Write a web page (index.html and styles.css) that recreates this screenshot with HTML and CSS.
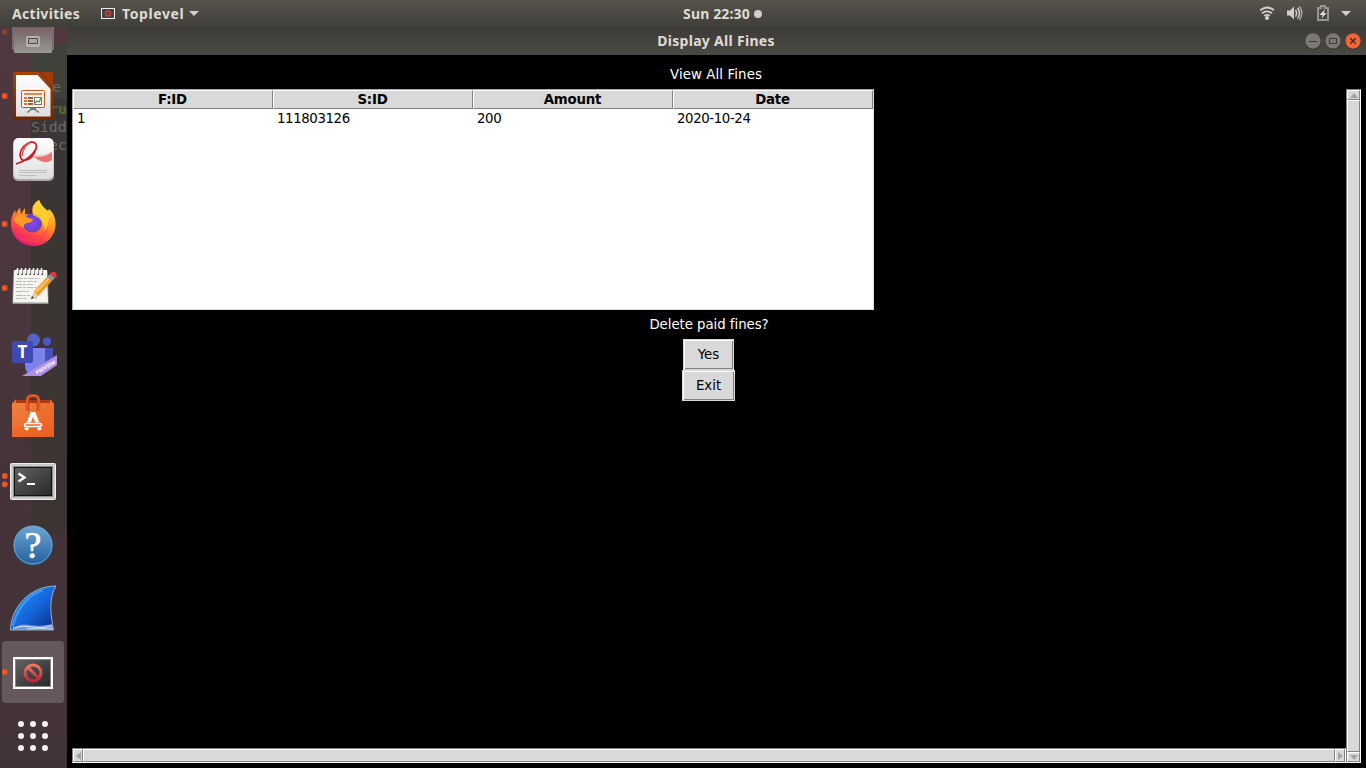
FILE: index.html
```html
<!DOCTYPE html>
<html lang="en">
<head>
<meta charset="utf-8">
<title>Display All Fines</title>
<link rel="stylesheet" href="styles.css">
</head>
<body>
<header class="topbar">
  <div class="top-left">
    <span class="activities"><span class="t-act">Activities</span></span>
    <svg class="app-ico" width="14" height="12" viewBox="0 0 14 12"><rect x=".5" y=".5" width="13" height="10" fill="#444" stroke="#eee"/><circle cx="7" cy="5.5" r="2.5" fill="none" stroke="#d13c3c" stroke-width="1.3"/><path d="M5.3 3.8l3.4 3.4" stroke="#d13c3c"/></svg>
    <span class="t-top">Toplevel</span>
    <svg class="caret" width="10" height="5" viewBox="0 0 10 5"><path d="M0 0h10L5 5z" fill="#d3d0cc"/></svg>
  </div>
  <div class="clock"><span>Sun 22:30</span><i></i></div>
  <svg class="tray" width="106" height="27" viewBox="1260 0 106 27">
    <g fill="none" stroke="#d3d0cc" stroke-width="1.800"><path d="M1260 10.300q7-5.500 14 0"/><path d="M1262 13.200q5-3.800 10 0"/><path d="M1264.200 15.800q2.800-2 5.600 0"/></g>
    <circle cx="1267" cy="18" r="2.100" fill="#d3d0cc"/>
    <path d="M1287 10.500h3l4-4v13l-4-4h-3z" fill="#d3d0cc"/>
    <g fill="none" stroke="#d3d0cc" stroke-width="1.500"><path d="M1295.500 10q2.200 3.300 0 6.600"/><path d="M1297.500 8q4 5.300 0 10.600"/><path d="M1299.300 6.500q5 6.800 0 13.600" stroke="#aaa7a2"/></g>
    <path d="M1318 8h3V6h4v2h3v12h-10z" fill="none" stroke="#999690" stroke-width="2"/>
    <path d="M1325 9l-5.500 6h3l-1 3.500 5-5.500h-2.800z" fill="#e5e2de"/>
    <path d="M1341 11h10l-5 5z" fill="#d3d0cc"/>
  </svg>
</header>
<div class="desktop">
  <nav class="dock">
    <div class="behind"><span class="b1">e</span><span class="b2">ru</span><span class="b3">Sidd</span><span class="b4">ec</span></div>
    <svg class="cell first" viewBox="0 27 67 37">
      <defs>
        <linearGradient id="files" x2="0" y2="1"><stop stop-color="#776065"/><stop offset="1" stop-color="#979894"/></linearGradient>
        <linearGradient id="paper" x2="0" y2="1"><stop stop-color="#fff"/><stop offset="1" stop-color="#dedede"/></linearGradient>
        <linearGradient id="brown" x2="0" y2="1"><stop stop-color="#a94308"/><stop offset="1" stop-color="#702900"/></linearGradient>
        <linearGradient id="fox" x1=".8" x2=".3" y2="1"><stop stop-color="#ffe43a"/><stop offset=".4" stop-color="#ff9b24"/><stop offset=".75" stop-color="#ff404b"/><stop offset="1" stop-color="#d8117f"/></linearGradient>
        <radialGradient id="globe"><stop stop-color="#8c45f4"/><stop offset="1" stop-color="#6546bd"/></radialGradient>
        <linearGradient id="bag" x2="1" y2="1"><stop stop-color="#f1803c"/><stop offset="1" stop-color="#eb5d23"/></linearGradient>
        <linearGradient id="screen" x2="1" y2="1"><stop stop-color="#626262"/><stop offset=".55" stop-color="#424242"/><stop offset="1" stop-color="#292929"/></linearGradient>
        <linearGradient id="help" x2="0" y2="1"><stop stop-color="#6da4d4"/><stop offset="1" stop-color="#23619f"/></linearGradient>
        <linearGradient id="fin" x2="1" y2="1"><stop stop-color="#2e98f5"/><stop offset=".5" stop-color="#1469dd"/><stop offset="1" stop-color="#082a84"/></linearGradient>
        <linearGradient id="ban" x2="0" y2="1"><stop stop-color="#ef7661"/><stop offset="1" stop-color="#c5253c"/></linearGradient>
      </defs>
      <circle cx="4.700" cy="32" r="2.700" fill="#8b4331"/>
      <path d="M12 27h42v23H12z" fill="#776b6d"/><path d="M14 27h38v25a1 1 0 0 1-1 1H15a1 1 0 0 1-1-1z" fill="url(#files)"/>
      <rect x="26" y="36" width="14" height="11" rx="2" fill="#b5b0b0"/><rect x="28.500" y="38.500" width="9" height="5" fill="#aaa5a5" stroke="#514b4a"/>
    </svg>
    <svg class="cell" viewBox="0 0 67 64">
      <circle cx="4.700" cy="32" r="2.900" fill="#f05423"/>
      <path d="M40 8h11q2 0 2 2v13z" fill="#a13b03"/>
      <path d="M15 8h24l14 16v29q0 3-3 3H16q-3 0-3-3V10q0-2 2-2z" fill="url(#brown)"/>
      <path d="M16 11h21.500L50.500 25v27.500H16z" fill="url(#paper)"/>
      <rect x="21.500" y="26.500" width="23" height="17" rx="1" fill="#fff2e7" stroke="#b85b27"/>
      <path d="M24 30h18" stroke="#d77736" stroke-width="1.700"/>
      <path d="M24 34h3m-3 3h3m-3 3h3" stroke="#e06c38" stroke-width="1.800"/><path d="M28 34h5m-5 3h5m-5 3h5" stroke="#79310e" stroke-width="1.300"/>
      <rect x="34.500" y="33.500" width="7" height="7" fill="#fff" stroke="#777"/><path d="M35 39l2-2 2 1 2-4" fill="none" stroke="#39a435" stroke-width="1.300"/>
      <path d="M33 44v1m-1 0l-5 3.500m7-3.500l5 3.500" stroke="#777" stroke-width="1.500"/><path d="M30 45h6" stroke="#777" stroke-width="2"/>
    </svg>
    <svg class="cell" viewBox="0 0 67 64">
      <rect x="13" y="11" width="41" height="42" rx="5" fill="#aaa"/><rect x="13.500" y="10" width="40" height="41" rx="5" fill="url(#paper)"/>
      <path d="M33 28Q43 31 52 24v8Q44 38 33 28z" fill="#e77575"/>
      <path d="M16 36Q30 28 40 28Q46 28 52 24" stroke="#eeb0b0" stroke-width="1.500" fill="none"/>
      <path d="M16 36Q30 32 36 21Q38 14 31 14Q21 17 20 27Q21 35 29 31Q33 29 36 21" fill="none" stroke="#c8232d" stroke-width="1.800"/>
      <path d="M30 15Q23 18 22 28" fill="none" stroke="#e85a60" stroke-width="1.500"/>
      <path d="M19 42.500h28M19 44.500h28M19 47.500h18" stroke="#bebebe"/>
    </svg>
    <svg class="cell" viewBox="0 0 67 64">
      <circle cx="4.700" cy="32" r="2.900" fill="#e85826"/>
      <path d="M39 8Q42 15 48 19L49 17Q55 22 55.500 31C56 44 46 54 34 54C21 54 11 45 11 32Q11 24 15 18L16 22Q18 17 20 16L21 22L25 16V22L33 23Q30 12 39 8z" fill="url(#fox)"/>
      <circle cx="32.500" cy="31" r="9.500" fill="url(#globe)"/>
      <path d="M14 27Q17 22 24 23Q29 27 33 27Q32 31 27 31Q23 32 24 36Q16 33 14 27z" fill="#ff9a26"/>
      <path d="M33 23Q31 13 39 8Q41 15 48 19Q51 28 45 39Q44 27 33 23z" fill="#ffd52f" opacity=".8"/>
      <path d="M14 40Q22 49 32 45Q42 47 48 35Q46 49 34 51Q20 52 14 40z" fill="#ff434c" opacity=".55"/>
    </svg>
    <svg class="cell" viewBox="0 0 67 64">
      <circle cx="4.700" cy="32" r="2.900" fill="#e85826"/>
      <path d="M13 15h35l1 33H12z" fill="#686763"/><path d="M14 14h33l1 32H13z" fill="#f4f4f0"/><path d="M13 46h35v1.500H13z" fill="#bfc8bf"/>
      <path d="M18 15v3m4-3v3m4-3v3m4-3v3m4-3v3m4-3v3m4-3v3" stroke="#444" stroke-width="2.200" stroke-linecap="round"/><path d="M17.500 13v4m4-4v4m4-4v4m4-4v4m4-4v4m4-4v4m4-4v4" stroke="#fff" stroke-width="1.800" stroke-linecap="round"/>
      <path d="M17 22.500h23M16 25.500h22M16 28.500h18M16 31.500h20M16 35.500h13M16 39.500h14M16 42.500h10" stroke="#b9bbb7" stroke-dasharray="6 1 3 1"/>
      <path d="M35 44L52 25l-3-4L33 39z" fill="#000" opacity=".15"/>
      <path d="M31 43l3-8 4 4z" fill="#f2cf91"/><path d="M31 43l1-3 2 2z" fill="#222"/>
      <path d="M34 35L47 21l5 4-14 15z" fill="#ee9824"/><path d="M35 35L48 22l2 1-13 14z" fill="#ffc362"/>
      <path d="M47 21l3-3 5 4-3 3z" fill="#8e9797"/><path d="M50 18q3-4 6-1 2 3-1 5z" fill="#e7373e"/>
    </svg>
    <svg class="cell" viewBox="0 0 67 64">
      <circle cx="33.500" cy="20" r="6.500" fill="#5562c7"/><circle cx="47" cy="21.500" r="4.200" fill="#4d58c3"/>
      <path d="M43 28h10v16q-4 8-13 6z" fill="#4650b5"/><path d="M25 28h20v17q-2 11-12 10-8-1-8-10z" fill="#7b83eb"/>
      <rect x="12" y="21" width="21" height="22" rx="2" fill="#4048b1"/><text x="22.500" y="37.500" class="teams-t">T</text>
      <path d="M22 56L57 35v10L41 56z" fill="#af8fe5"/><text class="preview" transform="translate(37 54.500) rotate(-31)">PREVIEW</text>
    </svg>
    <svg class="cell" viewBox="0 0 67 64">
      <path d="M15 16h36l3 4H12z" fill="#a93a13"/><path d="M12 20l4-5v5zM54 20l-4-5v5z" fill="#e56b37"/>
      <path d="M12 19h42v34H12z" fill="url(#bag)"/><path d="M12 43h42v10H12z" fill="#ee5e21" opacity=".4"/>
      <path d="M27.500 27V17q0-5 4-5h3q4 0 4 5v10" fill="none" stroke="#c64416" stroke-width="3.500"/><path d="M27 27V17q0-5 4-5.500h4q4 .5 4 5.500v10" fill="none" stroke="#ef7946"/>
      <path d="M26 46l6-16h2l6 16" fill="none" stroke="#fff" stroke-width="3.800"/><path d="M23.500 41h19" stroke="#ef6427" stroke-width="5"/><rect x="24.500" y="39.500" width="17" height="3" rx="1.500" fill="#ef6427" stroke="#fff" stroke-width="1.700"/>
    </svg>
    <svg class="cell" viewBox="0 0 67 64">
      <circle cx="4.800" cy="28" r="2.900" fill="#e85826"/><circle cx="4.800" cy="36.300" r="2.900" fill="#e85826"/>
      <rect x="10.500" y="15.500" width="45" height="36" rx="1" fill="#c9c9c7" stroke="#eee"/><rect x="13.500" y="18.500" width="39" height="30" fill="#111" stroke="#8d8d8d"/>
      <rect x="15" y="20" width="36" height="27" fill="url(#screen)"/><path d="M18.500 25.500l6 4-6 4" fill="none" stroke="#fff" stroke-width="2.300"/><path d="M27 36h8" stroke="#fff" stroke-width="2"/>
    </svg>
    <svg class="cell" viewBox="0 0 67 64"><circle cx="33" cy="33.500" r="20" fill="#244d72"/><circle cx="33" cy="33" r="19" fill="url(#help)" stroke="#79acd8"/><text class="question" x="33" y="46">?</text></svg>
    <svg class="cell" viewBox="0 0 67 64"><path d="M10.500 54C11 32 29 10 56 10C48 23 51 40 53.500 54z" fill="url(#fin)" stroke="#9eafc0"/><path d="M13 50C17 32 29 18 43 14" fill="none" stroke="#51adf7" stroke-width="2" opacity=".7"/><path d="M11 54q8-7 19-5t22-1l2 6z" fill="#719bd1"/><path d="M13 52q9-3 19-1t20-1M27 53q12-1 26 0" fill="none" stroke="#d1e1f6"/></svg>
    <svg class="cell" viewBox="0 0 67 64"><rect x="2" y="1" width="62" height="62" rx="4" fill="#65575b"/><circle cx="4.800" cy="32" r="2.900" fill="#e85826"/><rect x="14" y="18" width="38" height="30" fill="#888" stroke="#fff" stroke-width="2"/><rect x="16" y="20" width="34" height="26" fill="url(#screen)"/><g fill="none" stroke="url(#ban)" stroke-width="3"><circle cx="33" cy="33" r="8"/><path d="M28 27.500l10.500 10.500"/></g></svg>
    <svg class="cell" viewBox="0 0 67 64"><g fill="#f3f1f1"><circle cx="21" cy="20" r="3"/><circle cx="33" cy="20" r="3"/><circle cx="45" cy="20" r="3"/><circle cx="21" cy="32" r="3"/><circle cx="33" cy="32" r="3"/><circle cx="45" cy="32" r="3"/><circle cx="21" cy="44" r="3"/><circle cx="33" cy="44" r="3"/><circle cx="45" cy="44" r="3"/></g></svg>
  </nav>
  <main class="window">
    <div class="titlebar"><span class="title">Display All Fines</span>
      <svg class="controls" width="60" height="28" viewBox="1304 27 60 28"><circle cx="1313" cy="41.500" r="8" fill="#292824"/><circle cx="1333" cy="41.500" r="8" fill="#292824"/><circle cx="1353" cy="41.500" r="8" fill="#292824"/><circle cx="1313" cy="41" r="7.700" fill="#7b7972"/><circle cx="1333" cy="41" r="7.700" fill="#7b7972"/><circle cx="1353" cy="41" r="7.700" fill="#ef6438"/><path d="M1309 41.500h8" stroke="#3b3a36"/><rect x="1329.500" y="38.500" width="7" height="5" fill="none" stroke="#3b3a36"/><path d="M1350.300 38.300l5.400 5.400m0-5.400l-5.400 5.400" stroke="#3b2b22" stroke-width="1.300"/></svg>
    </div>
    <div class="heading"><span>View All Fines</span></div>
    <div class="frame">
      <div class="content">
        <div class="table">
          <div class="row head"><div>F:ID</div><div>S:ID</div><div>Amount</div><div>Date</div></div>
          <div class="row"><div>1</div><div>111803126</div><div>200</div><div>2020-10-24</div></div>
        </div>
        <div class="question-label">Delete paid fines?</div>
        <button class="btn yes">Yes</button>
        <button class="btn exit">Exit</button>
        <div class="scroll horizontal"><b><svg width="5" height="8"><path d="M5 0v8L0 4z"/></svg></b><i></i><b><svg width="5" height="8"><path d="M0 0v8l5-4z"/></svg></b></div>
      </div>
      <div class="scroll vertical"><b><svg width="8" height="5"><path d="M0 5h8L4 0z"/></svg></b><i></i><b><svg width="8" height="5"><path d="M0 0h8L4 5z"/></svg></b></div>
    </div>
  </main>
</div>
</body>
</html>
```
FILE: styles.css
```css
* { box-sizing: border-box; }
body { margin: 0; width: 1366px; height: 768px; overflow: hidden; background: #000; font-family: "DejaVu Sans", sans-serif; font-size: 13.33px; }
svg { display: block; flex: none; }
.topbar { height: 27px; display: grid; grid-template-columns: 1fr auto 1fr; align-items: center; background: linear-gradient(#57544c, #3f3e39); color: #dfdbd2; font: bold 14px/27px "Noto Sans", sans-serif; }
.top-left { display: flex; align-items: center; padding-left: 12px; }
.activities { width: 89px; }
.t-act { letter-spacing: .3px; }
.t-top { width: 62px; margin-left: 7px; letter-spacing: .6px; }
.caret { margin-left: 5px; }
.clock { display: flex; align-items: center; gap: 4px; padding-left: 79px; white-space: nowrap; letter-spacing: .15px; }
.clock i { width: 8px; height: 8px; border-radius: 50%; background: #d3d0cc; }
.tray { justify-self: end; }
.desktop { display: flex; height: 741px; }
.dock { position: relative; width: 67px; flex: none; background: linear-gradient(#503840, #4a363d 35%, #433238 75%, #44343a 95%, #3e3235); overflow: hidden; }
.cell { position: relative; width: 67px; height: 64px; }
.cell.first { height: 37px; }
.behind { position: absolute; left: 31px; top: 17px; width: 36px; height: 490px; background: linear-gradient(#41413c 0 54px, #3b3736 54px, #3c3433); font: 14.8px/18px "DejaVu Sans Mono", monospace; color: #6b6a67; }
.behind span { position: absolute; }
.b1 { left: 21px; top: 34px; }
.b2 { left: 18px; top: 56px; color: #526d36; font-weight: bold; }
.b3 { left: 0; top: 74px; }
.b4 { left: 18px; top: 92px; }
.teams-t { font: bold 17px "Noto Sans", sans-serif; fill: #fff; text-anchor: middle; }
.preview { font: bold 5px "Noto Sans", sans-serif; fill: #fff; }
.question { font: 38px "Liberation Serif", serif; fill: #fff; stroke: #fff; stroke-width: .6px; text-anchor: middle; }
.window { flex: 1; display: flex; flex-direction: column; }
.titlebar { height: 28px; flex: none; display: grid; grid-template-columns: 1fr auto 1fr; align-items: center; background: linear-gradient(#3c3b37, #4b4943); color: #dfdbd2; font: bold 14px/28px "Noto Sans", sans-serif; }
.title { grid-column: 2; letter-spacing: .3px; margin-right: 1px; }
.controls { justify-self: end; margin-right: 2px; }
.heading { height: 34px; flex: none; padding: 11px 1px 0 0; line-height: 18px; text-align: center; color: #fff; letter-spacing: .1px; }
.frame { flex: 1; display: flex; padding: 0 5px 5px; }
.content { flex: 1; display: flex; flex-direction: column; align-items: center; color: #fff; }
.table { width: 802px; height: 221px; align-self: flex-start; background: #fff; border: 1px solid #d9d9d9; border-top-color: #aaa; border-left-color: #aaa; color: #000; letter-spacing: -.4px; }
.row { display: grid; grid-template-columns: repeat(4, 200px); height: 20px; line-height: 20px; }
.row div { padding-left: 4px; }
.head { height: 19px; font-weight: bold; text-align: center; letter-spacing: -.2px; }
.row.head div { padding: 0 1px 0 0; background: #d9d9d9; border: 1px solid; border-color: #fff #828282 #828282 #fff; line-height: 17px; }
.question-label { height: 29px; line-height: 30px; letter-spacing: -.05px; }
.btn { flex: none; width: 51px; height: 31px; padding: 0; margin-right: 1px; border: 1px solid #d9d9d9; background: #d9d9d9; color: #000; font: inherit; line-height: 27px; box-shadow: inset 1px 1px #fff, inset -1px -1px #828282; }
.exit { width: 53px; }
.scroll { display: flex; background: #b3b3b3; border: 1px solid; border-color: #828282 #fff #fff #828282; }
.scroll b { display: flex; align-items: center; justify-content: center; flex: none; }
.scroll b, .scroll i { background: #d9d9d9; border: 1px solid; border-color: #fff #828282 #828282 #fff; }
.scroll i { flex: 1; }
.scroll path { fill: #a3a3a3; }
.horizontal { align-self: stretch; margin-top: auto; height: 15px; }
.horizontal b { width: 10px; }
.vertical { width: 15px; flex-direction: column; }
.vertical b { height: 10px; }
```
